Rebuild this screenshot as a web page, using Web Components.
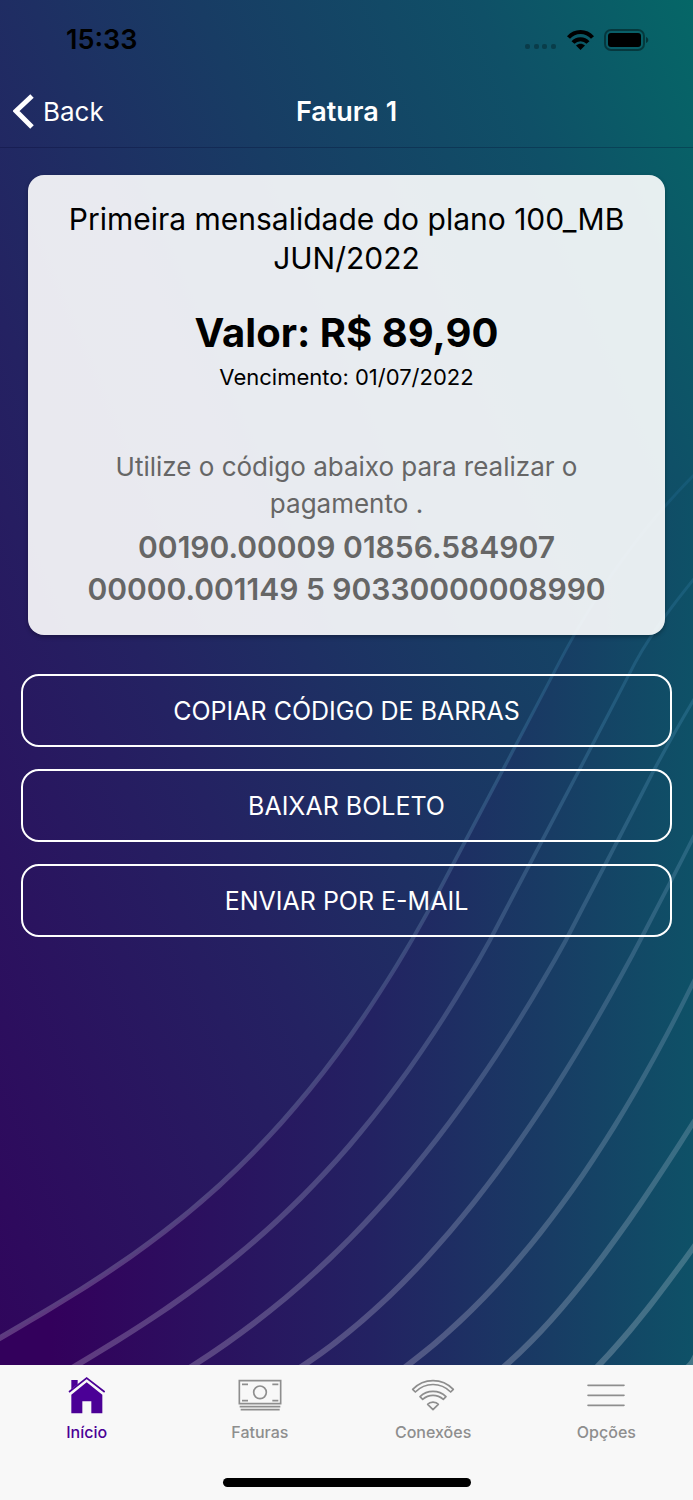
<!DOCTYPE html>
<html lang="pt-BR">
<head>
<meta charset="utf-8">
<meta name="viewport" content="width=device-width, initial-scale=1">
<title>Fatura 1</title>
<style>
  body {
    margin: 0;
    font-family: Inter, "Liberation Sans", sans-serif;
    color: #000;
  }
</style>
</head>
<body>

<app-screen>
  <status-bar slot="top" time="15:33"></status-bar>
  <nav-header slot="top" back="Back">Fatura 1</nav-header>

  <invoice-card
    value="Valor: R$ 89,90"
    due="Vencimento: 01/07/2022"
    hint="Utilize o código abaixo para realizar o pagamento ."
    code="00190.00009 01856.584907 00000.001149 5 90330000008990">Primeira mensalidade do plano 100_MB JUN/2022</invoice-card>

  <action-list>
    <outline-button>COPIAR CÓDIGO DE BARRAS</outline-button>
    <outline-button>BAIXAR BOLETO</outline-button>
    <outline-button>ENVIAR POR E-MAIL</outline-button>
  </action-list>

  <tab-bar slot="bottom">
    <tab-item icon="home" href="#inicio" active>Início</tab-item>
    <tab-item icon="money" href="#faturas">Faturas</tab-item>
    <tab-item icon="wifi" href="#conexoes">Conexões</tab-item>
    <tab-item icon="menu" href="#opcoes">Opções</tab-item>
  </tab-bar>
</app-screen>

<script>
// Center line of each wave: a start point, then three points per cubic
const WAVES = [
  [[0, 1338], [143, 1255], [287, 1168], [430, 908], [473, 827], [517, 743], [560, 661], [604, 578], [648, 522], [693, 476]],
  [[77, 1365], [215, 1283], [352, 1188], [490, 940], [538, 848], [587, 756], [635, 663], [654, 629], [674, 604], [693, 580]],
  [[194, 1365], [318, 1286], [442, 1164], [566, 940], [595, 884], [625, 827], [654, 770], [667, 746], [680, 723], [693, 701]],
  [[304, 1365], [417, 1290], [531, 1150], [644, 933], [660, 902], [677, 870], [693, 838]],
  [[408, 1365], [503, 1293], [598, 1177], [693, 983]],
  [[506, 1365], [568, 1311], [631, 1222], [693, 1123]],
  [[599, 1365], [630, 1333], [662, 1291], [693, 1248]],
  [[690, 1365], [691, 1364], [692, 1363], [693, 1361]]
];

// Outline of a wave, thicker at the bottom than at the top
function ribbon(pts) {
  const [p, q] = pts;
  const [r, s] = pts.slice(-2);
  const first = [p[0] - (q[0] - p[0]) / (q[0] - p[0]) * 20, p[1] - (q[1] - p[1]) / (q[0] - p[0]) * 20];
  const last = [s[0] + 20, s[1] + (s[1] - r[1]) / (s[0] - r[0]) * 20];
  const side = (sign) => [first, ...pts, last].map(([x, y]) => {
    const w = 1.4 + 1.6 * Math.max(0, (y - 600) / 765);
    return [x + sign * w * 0.75, y + sign * w * 0.66];
  });
  const edge = (list) => `${list[0]} L${list[1]} C${list.slice(2, -1).join(" ")} L${list[list.length - 1]}`;
  return `M${edge(side(-1))} L${edge(side(1).reverse())} Z`;
}

const ICONS = {
  home: `
    <path d="M12 51 65 9l54 42" fill="none" stroke="currentColor" stroke-width="5"/>
    <path d="M19 15h19v13L19 43zM65 22l47 37v56H79V79H52v36H19V59z" fill="currentColor"/>`,
  money: `
    <g fill="none" stroke="currentColor" stroke-width="5">
      <path d="M4 17h124v69H4zM12 28h18M103 28h18M12 77h18M103 77h18M5 95h122M8 104h117"/>
      <circle cx="66" cy="52" r="19"/>
    </g>`,
  wifi: `
    <g fill="none" stroke="currentColor" stroke-width="5" stroke-linejoin="round">
      <path d="M5 43C39 8 93 8 127 43l-8 8C89 21 43 21 13 51z"/>
      <path d="M27 65C49 44 83 44 105 65l-8 8C79 57 53 57 35 73z"/>
      <path d="M50 88C57 79 75 79 82 88L66 104z"/>
    </g>`,
  menu: `<path d="M12 31h108M12 61h108M12 91h108" fill="none" stroke="currentColor" stroke-width="5" stroke-linecap="round"/>`
};

class AppScreen extends HTMLElement {
  constructor() {
    super();
    this.attachShadow({ mode: "open" });
  }

  connectedCallback() {
    const [start, ...rest] = WAVES[0];
    this.shadowRoot.innerHTML = `
      <style>
        :host {
          display: flex;
          flex-direction: column;
          min-height: 100vh;
        }
        .stage {
          flex: 1;
          display: grid;
          grid-template: minmax(0, 1fr) / minmax(0, 1fr);
        }
        .backdrop, .content {
          grid-area: 1 / 1;
        }
        .backdrop {
          width: 100%;
          height: 100%;
          min-height: 0;
          background: linear-gradient(67deg, #30055c, #242262 35%, #183c64 61%, #0f5067 83%, #056767);
        }
        main {
          display: flex;
          flex-direction: column;
          gap: 39px;
          padding: 27px 21px 24px;
        }
      </style>
      <div class="stage">
        <svg class="backdrop" viewBox="0 0 693 1365" preserveAspectRatio="none" aria-hidden="true">
          <defs>
            <linearGradient id="under" gradientUnits="userSpaceOnUse" x1="50" y1="0" x2="693" y2="0">
              <stop offset="0" stop-color="#33005c"/>
              <stop offset=".5" stop-color="#232262"/>
              <stop offset=".78" stop-color="#183c64"/>
              <stop offset="1" stop-color="#0e5167"/>
            </linearGradient>
            <linearGradient id="line" gradientUnits="userSpaceOnUse" x1="0" y1="450" x2="0" y2="1365">
              <stop offset="0" stop-color="#2878aa" stop-opacity=".2"/>
              <stop offset=".3" stop-color="#4d94bc" stop-opacity=".28"/>
              <stop offset=".6" stop-color="#a0b4d2" stop-opacity=".24"/>
              <stop offset="1" stop-color="#fff" stop-opacity=".22"/>
            </linearGradient>
          </defs>
          <path d="M${start} C${rest.join(" ")} V1365 H0 Z" fill="url(#under)"/>
          ${WAVES.map((w) => `<path d="${ribbon(w)}" fill="url(#line)"/>`).join("")}
        </svg>
        <div class="content">
          <slot name="top"></slot>
          <main><slot></slot></main>
        </div>
      </div>
      <slot name="bottom"></slot>
    `;
  }
}

class StatusBar extends HTMLElement {
  constructor() {
    super();
    this.attachShadow({ mode: "open" });
  }

  connectedCallback() {
    this.shadowRoot.innerHTML = `
      <style>
        :host {
          display: flex;
          align-items: center;
          justify-content: space-between;
          height: 76px;
          padding: 4px 44px 0 66px;
          box-sizing: border-box;
        }
        time {
          font-size: 27px;
          font-weight: 600;
          line-height: 32px;
        }
        svg {
          display: block;
        }
      </style>
      <time>${this.getAttribute("time") || ""}</time>
      <svg width="124" height="22" viewBox="0 0 124 22" role="img" aria-label="Wi-Fi, bateria cheia">
        <g opacity=".28">
          <rect x="0" y="15" width="5" height="5" rx="2"/>
          <rect x="9" y="15" width="5" height="5" rx="2"/>
          <rect x="17" y="15" width="5" height="5" rx="2"/>
          <rect x="26" y="15" width="5" height="5" rx="2"/>
        </g>
        <g fill="none" stroke="#000" stroke-width="4">
          <path d="M43.500 8.500C50 1 61 1 67.500 8.500"/>
          <path d="M48 13.500C52 9 59 9 63 13.500"/>
        </g>
        <path d="M51 16.500C54 14 57 14 60 16.500L55.500 21z"/>
        <rect x="80" y="1" width="39" height="20" rx="6" fill="none" stroke="#000" stroke-opacity=".4" stroke-width="2"/>
        <rect x="83" y="4" width="33" height="14" rx="3"/>
        <path d="M121 8c3 1 3 5 0 6z" fill-opacity=".45"/>
      </svg>
    `;
  }
}

class NavHeader extends HTMLElement {
  constructor() {
    super();
    this.attachShadow({ mode: "open" });
  }

  connectedCallback() {
    this.shadowRoot.innerHTML = `
      <style>
        :host {
          display: block;
          border-bottom: 1px solid rgba(0, 0, 40, .25);
          color: #fff;
        }
        header {
          display: grid;
          grid-template-columns: 1fr auto 1fr;
          align-items: center;
          height: 71px;
          padding: 0 13px;
        }
        button {
          justify-self: start;
          display: flex;
          align-items: center;
          gap: 8px;
          padding: 0;
          border: 0;
          background: none;
          color: inherit;
          font: 400 26px/34px Inter, "Liberation Sans", sans-serif;
          cursor: pointer;
        }
        h1 {
          margin: 0;
          font-size: 27px;
          font-weight: 600;
          line-height: 34px;
        }
      </style>
      <header>
        <button type="button">
          <svg width="22" height="36" viewBox="0 0 22 36" aria-hidden="true">
            <path d="M19 2 3 17l16 16" fill="none" stroke="#fff" stroke-width="5"/>
          </svg>
          <span>${this.getAttribute("back") || ""}</span>
        </button>
        <h1><slot></slot></h1>
      </header>
    `;
  }
}

class InvoiceCard extends HTMLElement {
  constructor() {
    super();
    this.attachShadow({ mode: "open" });
  }

  connectedCallback() {
    const value = this.getAttribute("value") || "";
    const due = this.getAttribute("due") || "";
    const hint = this.getAttribute("hint") || "";
    const code = this.getAttribute("code") || "";

    this.shadowRoot.innerHTML = `
      <style>
        :host {
          display: block;
          margin: 0 7px;
          padding: 25px 24px;
          border-radius: 16px;
          background: rgba(255, 255, 255, .9);
          box-shadow: 0 2px 4px rgba(0, 0, 0, .3);
          text-align: center;
        }
        h2, p {
          margin: 0;
          font-weight: 400;
        }
        h2 {
          font-size: 30px;
          line-height: 39px;
        }
        .value {
          margin-top: 30px;
          font-size: 40px;
          font-weight: 700;
          line-height: 50px;
        }
        .due {
          margin-top: 5px;
          font-size: 22px;
          line-height: 28px;
        }
        .hint, .code {
          color: #666;
        }
        .hint {
          margin-top: 57px;
          padding: 0 40px;
          font-size: 26px;
          line-height: 37px;
        }
        .code {
          margin-top: 4px;
          font-size: 30px;
          font-weight: 600;
          line-height: 42px;
        }
      </style>
      <h2><slot></slot></h2>
      <p class="value">${value}</p>
      <p class="due">${due}</p>
      <p class="hint">${hint}</p>
      <p class="code">${code}</p>
    `;
  }
}

class ActionList extends HTMLElement {
  constructor() {
    super();
    this.attachShadow({ mode: "open" });
    this.shadowRoot.innerHTML = `
      <style>
        :host {
          display: flex;
          flex-direction: column;
          gap: 22px;
        }
      </style>
      <slot></slot>
    `;
  }
}

class OutlineButton extends HTMLElement {
  constructor() {
    super();
    this.attachShadow({ mode: "open" });
    this.shadowRoot.innerHTML = `
      <style>
        :host {
          display: block;
        }
        button {
          display: block;
          width: 100%;
          height: 73px;
          padding: 1px 16px 0;
          border: 2px solid #fff;
          border-radius: 18px;
          background: none;
          color: #fff;
          font: 400 25px/32px Inter, "Liberation Sans", sans-serif;
          cursor: pointer;
        }
      </style>
      <button type="button"><slot></slot></button>
    `;
  }
}

class TabBar extends HTMLElement {
  constructor() {
    super();
    this.attachShadow({ mode: "open" });
    this.shadowRoot.innerHTML = `
      <style>
        :host {
          display: flex;
          flex-direction: column;
          justify-content: space-between;
          height: 135px;
          padding: 10px 0 13px;
          box-sizing: border-box;
          background: #f8f8f8;
        }
        nav {
          display: grid;
          grid-template-columns: repeat(4, 1fr);
        }
        .indicator {
          align-self: center;
          width: 248px;
          height: 9px;
          border-radius: 5px;
          background: #000;
        }
      </style>
      <nav><slot></slot></nav>
      <div class="indicator"></div>
    `;
  }
}

class TabItem extends HTMLElement {
  constructor() {
    super();
    this.attachShadow({ mode: "open" });
  }

  connectedCallback() {
    const icon = ICONS[this.getAttribute("icon")] || "";
    this.shadowRoot.innerHTML = `
      <style>
        :host {
          display: block;
          color: #8e8e8e;
        }
        :host([active]) {
          color: #4b0096;
        }
        a {
          display: flex;
          flex-direction: column;
          align-items: center;
          gap: 7px;
          color: inherit;
          text-decoration: none;
          font-size: 16px;
          font-weight: 500;
          line-height: 20px;
        }
      </style>
      <a href="${this.getAttribute("href") || "#"}">
        <svg width="44" height="40" viewBox="0 0 132 120" aria-hidden="true">${icon}</svg>
        <span><slot></slot></span>
      </a>
    `;
  }
}

customElements.define("app-screen", AppScreen);
customElements.define("status-bar", StatusBar);
customElements.define("nav-header", NavHeader);
customElements.define("invoice-card", InvoiceCard);
customElements.define("action-list", ActionList);
customElements.define("outline-button", OutlineButton);
customElements.define("tab-bar", TabBar);
customElements.define("tab-item", TabItem);
</script>
</body>
</html>
